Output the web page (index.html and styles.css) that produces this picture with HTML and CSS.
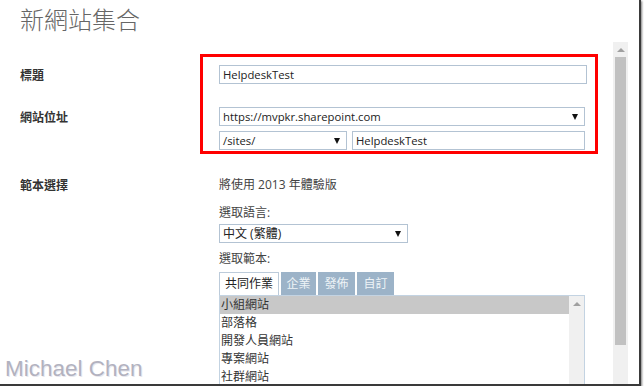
FILE: index.html
```html
<!DOCTYPE html>
<html lang="zh-Hant">
<head>
  <meta charset="UTF-8">
  <meta name="viewport" content="width=device-width, initial-scale=1.0">
  <title>新網站集合</title>
  <link rel="stylesheet" href="styles.css">
</head>
<body>
  <div class="screen">
    <div class="page">
      <main class="content">
        <h1 class="page-title">新網站集合</h1>

        <div class="field-row row-title">
          <div class="label">標題</div>
          <div class="control">
            <div class="text-box title-box">HelpdeskTest</div>
          </div>
        </div>

        <div class="field-row row-url">
          <div class="label">網站位址</div>
          <div class="control url-stack">
            <div class="select host-select">
              <span>https://mvpkr.sharepoint.com</span>
              <span class="arrow"></span>
            </div>
            <div class="url-parts">
              <div class="select prefix-select">
                <span>/sites/</span>
                <span class="arrow"></span>
              </div>
              <div class="text-box path-box">HelpdeskTest</div>
            </div>
          </div>
        </div>

        <div class="field-row row-template">
          <div class="label">範本選擇</div>
          <div class="control">
            <p class="note">將使用 2013 年體驗版</p>
            <p class="caption">選取語言:</p>
            <div class="select lang-select">
              <span>中文 (繁體)</span>
              <span class="arrow"></span>
            </div>
            <p class="caption caption-template">選取範本:</p>
            <div class="tabs">
              <span class="tab active">共同作業</span>
              <span class="tab">企業</span>
              <span class="tab">發佈</span>
              <span class="tab">自訂</span>
            </div>
            <div class="template-list">
              <ul class="templates">
                <li class="selected">小組網站</li>
                <li>部落格</li>
                <li>開發人員網站</li>
                <li>專案網站</li>
                <li>社群網站</li>
              </ul>
              <div class="list-scroll">
                <span class="scroll-up"></span>
              </div>
            </div>
          </div>
        </div>
      </main>

      <div class="page-scroll">
        <div class="scroll-btn"><span class="scroll-up"></span></div>
        <div class="scroll-thumb"></div>
      </div>
    </div>

    <!-- annotation drawn over the screenshot -->
    <div class="highlight"></div>
    <div class="watermark">Michael Chen</div>
  </div>
</body>
</html>
```

FILE: styles.css
```css
body {
  margin: 0;
  background: #fff;
  font-family: "Open Sans", "Noto Sans CJK TC", sans-serif;
  color: #333;
}

.screen {
  position: relative;
  width: 639px;
  height: 384px;
  overflow: hidden;
  background: #fff;
  border-right: 2px solid #3a3a3a;
  border-bottom: 2px solid #3a3a3a;
  box-shadow: 1px 1px 2px rgba(0,0,0,0.5);
}

.page {
  display: flex;
  height: 100%;
}

.content {
  flex: 1;
  padding-left: 20px;
}

.page-title {
  margin: 0;
  padding-top: 4px;
  font-family: "Noto Sans CJK TC", sans-serif;
  font-weight: 300;
  font-size: 24px;
  line-height: 30px;
  color: #666;
}

.field-row {
  display: grid;
  grid-template-columns: 199px 1fr;
}

.label {
  font-family: "Noto Sans CJK TC", sans-serif;
  font-weight: 700;
  font-size: 12px;
  line-height: 19px;
  color: #333;
}

.row-title {
  margin-top: 31px;
}

.row-url {
  margin-top: 23px;
}

.row-template {
  margin-top: 26px;
}

.row-template .label {
  line-height: 18px;
}

.text-box,
.select {
  box-sizing: border-box;
  height: 19px;
  border: 1px solid #b3c3d3;
  background: #fff;
  font-size: 11.3px;
  line-height: 17px;
  color: #222;
  padding: 0 3px;
}

.select {
  display: flex;
  align-items: center;
  justify-content: space-between;
  padding-right: 6px;
}

.lang-select {
  font-size: 12px;
}

.arrow {
  width: 0;
  height: 0;
  border-left: 3px solid transparent;
  border-right: 3px solid transparent;
  border-top: 6px solid #111;
}

.title-box {
  width: 368px;
}

.url-stack {
  display: flex;
  flex-direction: column;
  gap: 5px;
}

.host-select {
  width: 366px;
}

.url-parts {
  display: flex;
  gap: 5px;
  width: 366px;
}

.prefix-select {
  width: 128px;
}

.path-box {
  flex: 1;
}

.note,
.caption {
  margin: 0;
  font-size: 12px;
  line-height: 18px;
  color: #444;
}

.caption {
  margin-top: 10px;
}

.lang-select {
  width: 189px;
  margin-top: 2px;
}

.caption-template {
  margin-top: 7px;
}

.tabs {
  display: flex;
  gap: 2px;
  margin-top: 4px;
  height: 23px;
}

.tab {
  box-sizing: border-box;
  width: 35px;
  text-align: center;
  font-size: 12px;
  line-height: 23px;
  background: #9cb3c8;
  color: #eef3f7;
}

.tab.active {
  width: 60px;
  background: #fff;
  color: #222;
  border: 1px solid #bccbda;
  border-bottom: none;
  line-height: 22px;
}

.tabs .tab:nth-child(3),
.tabs .tab:nth-child(4) {
  width: 37px;
}

.template-list {
  display: flex;
  width: 366px;
  height: 120px;
  box-sizing: border-box;
  border: 1px solid #c3d3e2;
}

.templates {
  flex: 1;
  margin: 0;
  padding: 0;
  list-style: none;
}

.templates li {
  height: 18px;
  line-height: 18px;
  font-size: 12px;
  color: #333;
  padding-left: 1px;
}

.templates li.selected {
  background: #c8c8c8;
}

.list-scroll {
  width: 15px;
  background: #f0f0f0;
  display: flex;
  justify-content: center;
  padding-top: 6px;
}

.scroll-up {
  width: 0;
  height: 0;
  border-left: 4px solid transparent;
  border-right: 4px solid transparent;
  border-bottom: 4px solid #a0a0a0;
}

.page-scroll {
  width: 15px;
  margin-top: 42px;
  margin-right: 11px;
  background: #f0f0f0;
  display: flex;
  flex-direction: column;
  align-items: center;
}

.scroll-btn {
  height: 15px;
  display: flex;
  align-items: center;
  justify-content: center;
}

.scroll-thumb {
  width: 11px;
  height: 288px;
  background: #c1c1c1;
}

.highlight {
  position: absolute;
  left: 200px;
  top: 54px;
  width: 392px;
  height: 94px;
  border: 3px solid #f00;
}

.watermark {
  position: absolute;
  left: 5px;
  top: 356px;
  font-family: "Liberation Sans", Arial, sans-serif;
  font-size: 22.5px;
  line-height: 26px;
  color: #b2b2bf;
  text-shadow: 1px 1px 0 #e8e8ee;
}
```
